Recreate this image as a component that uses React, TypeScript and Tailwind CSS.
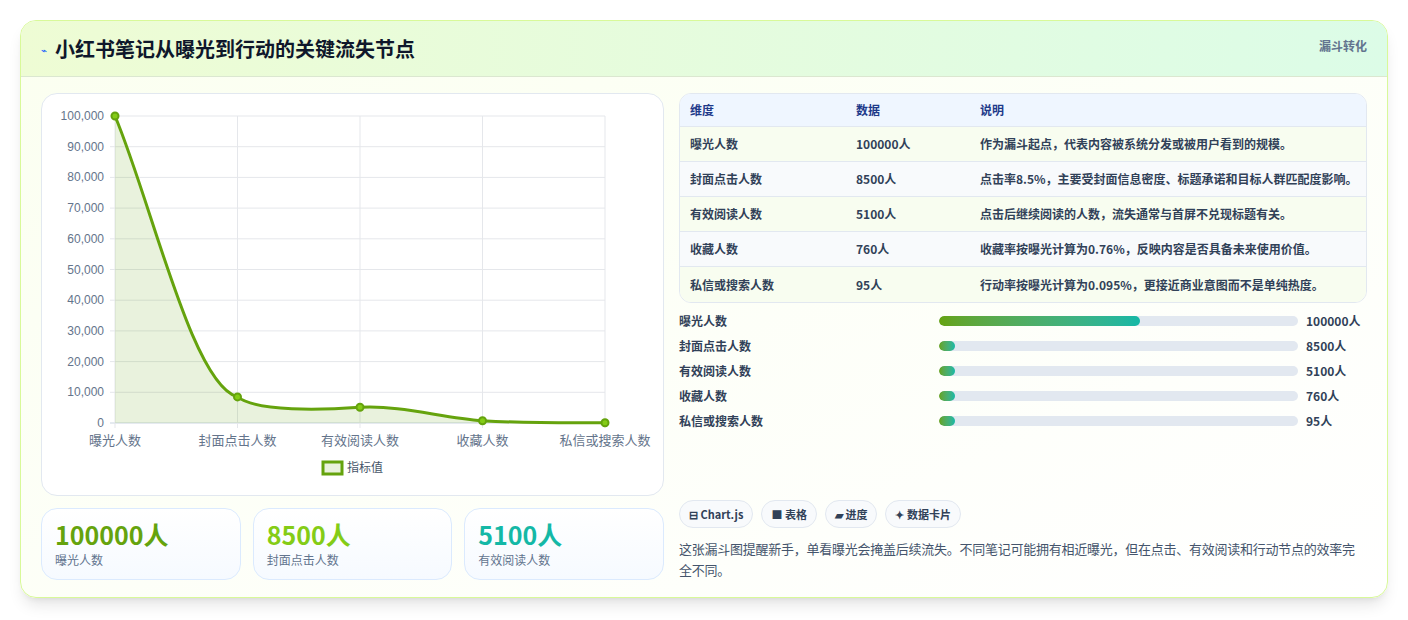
const font = { fontFamily: '"Noto Sans CJK SC", "Noto Sans", sans-serif' };

const rows = [
  { k: '曝光人数', v: '100000人', d: '作为漏斗起点，代表内容被系统分发或被用户看到的规模。', pct: 56 },
  { k: '封面点击人数', v: '8500人', d: '点击率8.5%，主要受封面信息密度、标题承诺和目标人群匹配度影响。', pct: 4.5 },
  { k: '有效阅读人数', v: '5100人', d: '点击后继续阅读的人数，流失通常与首屏不兑现标题有关。', pct: 4.5 },
  { k: '收藏人数', v: '760人', d: '收藏率按曝光计算为0.76%，反映内容是否具备未来使用价值。', pct: 4.5 },
  { k: '私信或搜索人数', v: '95人', d: '行动率按曝光计算为0.095%，更接近商业意图而不是单纯热度。', pct: 4.5 },
];

const xs = [73, 195.5, 318, 440.5, 563];
const ys = [22, 302.9, 313.3, 326.7, 328.7];
const ticks = ['100,000', '90,000', '80,000', '70,000', '60,000', '50,000', '40,000', '30,000', '20,000', '10,000', '0'];
const curve = 'M73,22 C110,110 150,290 195.5,302.9 C215,318 280,316 318,313.3 C360,311 400,324 440.5,326.7 C480,329 520,329 563,328.7';

function Chart() {
  return (
    <svg width="623" height="403" className="block">
      {ticks.map((t, i) => {
        const y = 22 + i * 30.7;
        return (
          <g key={t}>
            <line x1="68" x2="563" y1={y} y2={y} stroke={i === 10 ? '#cbd5e1' : '#e5e7eb'} />
            <text x="62" y={y + 4} textAnchor="end" fontSize="12" fill="#64748b" fontFamily="Liberation Sans, sans-serif">{t}</text>
          </g>
        );
      })}
      {xs.map((x) => (
        <line key={x} x1={x} x2={x} y1="22" y2="334" stroke="#e5e7eb" />
      ))}
      <path d={curve + ' L563,329 L73,329 Z'} fill="#65a30d" fillOpacity="0.14" />
      <path d={curve} fill="none" stroke="#65a30d" strokeWidth="3" />
      {xs.map((x, i) => (
        <circle key={x} cx={x} cy={ys[i]} r="3.5" fill="#84cc16" stroke="#65a30d" strokeWidth="2" />
      ))}
      {rows.map((r, i) => (
        <text key={r.k} x={xs[i]} y="351" textAnchor="middle" fontSize="13" fill="#64748b" style={font}>{r.k}</text>
      ))}
      <rect x="281" y="368" width="19" height="12" fill="#65a30d" fillOpacity="0.14" stroke="#65a30d" strokeWidth="3" />
      <text x="305" y="378" fontSize="12" fill="#475569" style={font}>指标值</text>
    </svg>
  );
}

export default function App() {
  return (
    <div className="w-[1408px] h-[620px] bg-white p-5" style={font}>
      <div className="rounded-2xl border border-lime-200 shadow-lg overflow-hidden bg-gradient-to-br from-[#fbfff0] to-white">
        <div className="h-14 flex items-start justify-between px-5 pt-[14px] bg-gradient-to-r from-[#eefcd4] to-[#dcfce7] border-b border-[#dbe7d0]">
          <div className="flex items-center gap-2">
            <span className="text-[10px] text-blue-600">⌁</span>
            <h1 className="text-xl font-bold text-slate-900 leading-7">小红书笔记从曝光到行动的关键流失节点</h1>
          </div>
          <span className="text-xs font-bold text-slate-500 pt-[3px]">漏斗转化</span>
        </div>
        <div className="flex gap-[15px] p-5 pt-4 pb-[17px]">
          <div className="w-[623px] flex flex-col gap-3">
            <div className="h-[403px] rounded-2xl border border-slate-200 bg-white overflow-hidden">
              <Chart />
            </div>
            <div className="grid grid-cols-3 gap-3">
              {[
                { v: '100000人', l: '曝光人数', c: 'text-[#65a30d]' },
                { v: '8500人', l: '封面点击人数', c: 'text-[#84cc16]' },
                { v: '5100人', l: '有效阅读人数', c: 'text-[#14b8a6]' },
              ].map((s) => (
                <div key={s.l} className="h-[72px] rounded-2xl border border-blue-100 bg-gradient-to-b from-white to-[#f6faff] px-[13px] pt-[9px]">
                  <div className={`text-[25px] font-bold leading-8 ${s.c}`}>{s.v}</div>
                  <div className="text-xs text-slate-500 mt-[2px]">{s.l}</div>
                </div>
              ))}
            </div>
          </div>
          <div className="flex-1 flex flex-col">
            <div className="rounded-xl border border-slate-200 overflow-hidden bg-white">
              <div className="flex h-[33px] items-center bg-[#eff6ff] text-xs font-bold text-[#1e3a8a] border-b border-slate-200">
                <div className="w-[176px] pl-[10px]">维度</div>
                <div className="w-[124px]">数据</div>
                <div>说明</div>
              </div>
              {rows.map((r, i) => (
                <div key={r.k} className={`flex h-[35px] items-center text-xs font-bold text-slate-700 ${i < 4 ? 'border-b border-slate-200' : ''} ${i % 2 === 0 ? 'bg-[#f8fdf0]' : 'bg-[#f8fafc]'}`}>
                  <div className="w-[176px] pl-[10px]">{r.k}</div>
                  <div className="w-[124px]">{r.v}</div>
                  <div>{r.d}</div>
                </div>
              ))}
            </div>
            <div className="flex flex-col gap-[9px] mt-[10px]">
              {rows.map((r) => (
                <div key={r.k} className="flex items-center h-4 text-xs font-bold text-slate-700">
                  <div className="w-[260px]">{r.k}</div>
                  <div className="w-[359px] h-[10px] rounded-full bg-slate-200 overflow-hidden">
                    <div className="h-full rounded-full bg-gradient-to-r from-[#65a30d] to-[#14b8a6]" style={{ width: `${r.pct}%` }} />
                  </div>
                  <div className="ml-2">{r.v}</div>
                </div>
              ))}
            </div>
            <div className="flex-1" />
            <div className="flex gap-2">
              {['⊟ Chart.js', '■ 表格', '▰ 进度', '✦ 数据卡片'].map((c) => (
                <span key={c} className="h-[28px] px-[9px] flex items-center rounded-full border border-slate-200 bg-[#f8fafc] text-[11px] font-bold text-slate-700">{c}</span>
              ))}
            </div>
            <p className="mt-[10px] text-[13px] leading-[21px] tracking-[-0.25px] text-slate-600">这张漏斗图提醒新手，单看曝光会掩盖后续流失。不同笔记可能拥有相近曝光，但在点击、有效阅读和行动节点的效率完全不同。</p>
          </div>
        </div>
      </div>
    </div>
  );
}
